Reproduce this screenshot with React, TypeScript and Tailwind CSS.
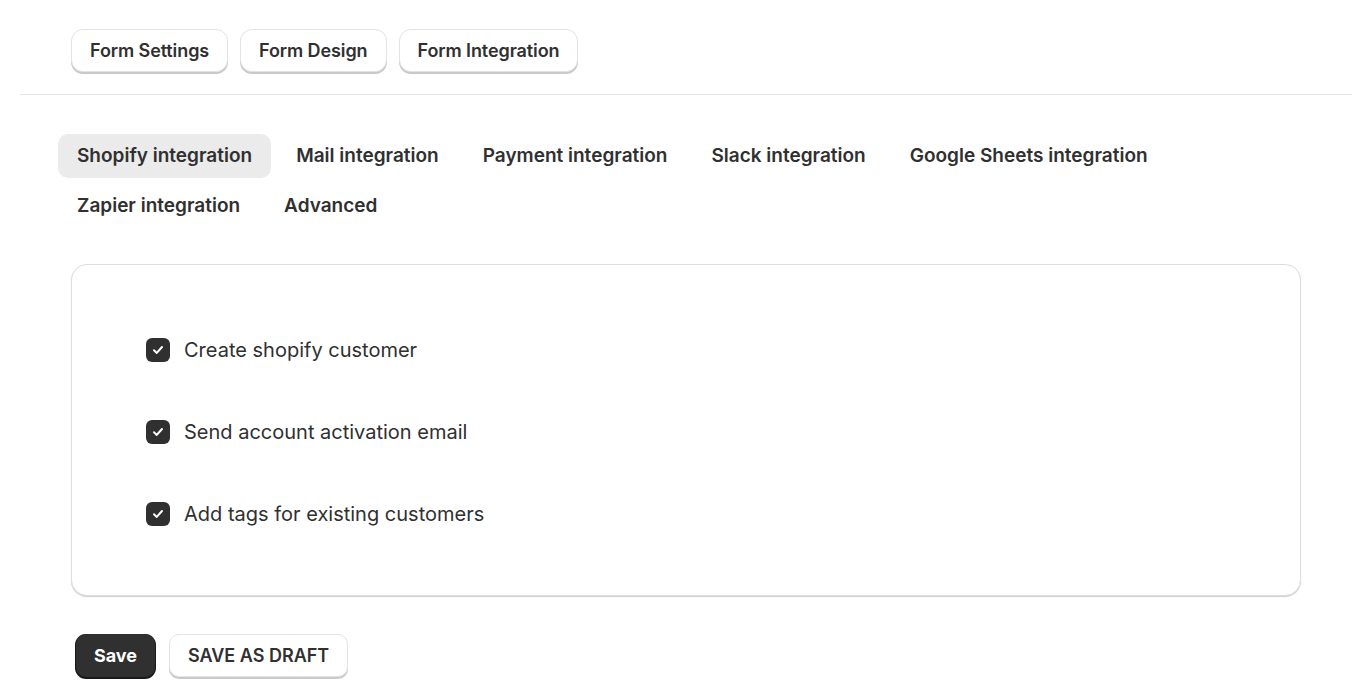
import React from "react";

const font = { fontFamily: "Inter, 'Noto Sans', sans-serif" };

function TopButton({ label }: { label: string }) {
  return (
    <button className="h-[43px] px-[18px] rounded-[12px] bg-white border border-[#e3e3e3] shadow-[0_2px_0_0_#c9c9c9] text-[18px] font-semibold text-[#303030] tracking-[-0.1px]">
      {label}
    </button>
  );
}

function Check({ label }: { label: string }) {
  return (
    <div className="flex items-center gap-[14px] h-[30px]">
      <div className="w-[24px] h-[24px] rounded-[6px] bg-[#303030] flex items-center justify-center">
        <svg width="16" height="16" viewBox="0 0 16 16" fill="none">
          <path d="M4 8.3 L6.8 10.9 L12 5" stroke="white" strokeWidth="2" strokeLinecap="round" strokeLinejoin="round" />
        </svg>
      </div>
      <span className="text-[20px] leading-[30px] text-[#303030]">{label}</span>
    </div>
  );
}

export default function App() {
  const tabs = [
    "Shopify integration",
    "Mail integration",
    "Payment integration",
    "Slack integration",
    "Google Sheets integration",
    "Zapier integration",
    "Advanced",
  ];
  return (
    <div className="bg-white min-h-[693px] pt-[29px]" style={font}>
      <div className="flex gap-[12px] pl-[71px]">
        <TopButton label="Form Settings" />
        <TopButton label="Form Design" />
        <TopButton label="Form Integration" />
      </div>
      <div className="ml-[20px] mr-[14px] mt-[22px] border-t border-[#e6e6e6]" />
      <div className="pl-[58px] pr-[150px] mt-[39px] flex flex-wrap gap-x-[6px] gap-y-[6px]">
        {tabs.map((t, i) => (
          <div
            key={t}
            className={`h-[44px] px-[19px] flex items-center rounded-[10px] text-[19px] font-semibold text-[#303030] ${i === 0 ? "bg-[#ebebeb]" : ""}`}
          >
            {t}
          </div>
        ))}
      </div>
      <div className="ml-[71px] mr-[65px] mt-[36px] h-[332px] rounded-[16px] border border-[#dedede] shadow-[0_1px_1px_0_#cfcfcf] bg-white pt-[70px] pl-[74px] flex flex-col gap-[52px]">
        <Check label="Create shopify customer" />
        <Check label="Send account activation email" />
        <Check label="Add tags for existing customers" />
      </div>
      <div className="flex gap-[14px] pl-[76px] mt-[38px]">
        <button className="h-[43px] w-[79px] rounded-[10px] bg-[#303030] text-white text-[18px] font-bold shadow-[0_1px_0_1px_#1a1a1a]">
          Save
        </button>
        <button className="h-[43px] px-[18px] rounded-[10px] bg-white border border-[#e3e3e3] shadow-[0_2px_0_0_#c9c9c9] text-[18px] font-semibold text-[#303030]">
          SAVE AS DRAFT
        </button>
      </div>
    </div>
  );
}
